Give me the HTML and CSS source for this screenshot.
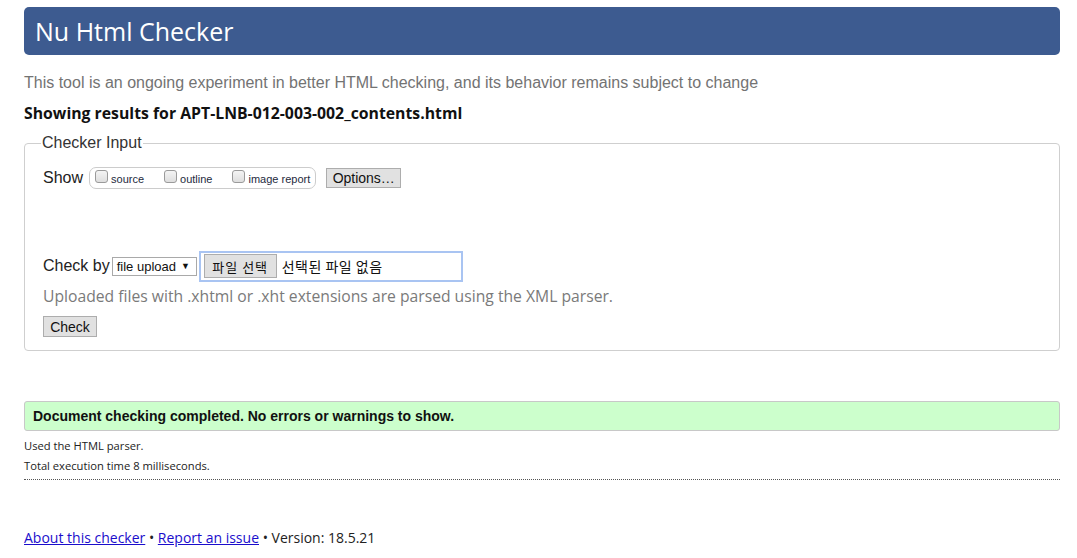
FILE: index.html
```html
<!DOCTYPE html>
<html lang="en">
<head>
<meta charset="utf-8">
<title>Nu Html Checker</title>
<link rel="stylesheet" href="styles.css">
</head>
<body>
<h1 class="banner">Nu Html Checker</h1>
<p class="intro">This tool is an ongoing experiment in better HTML checking, and its behavior remains subject to change</p>
<p class="showing">Showing results for APT-LNB-012-003-002_contents.html</p>
<fieldset class="input-box">
  <legend class="legend">Checker Input</legend>
  <div class="row show-row">
    <span class="row-label">Show</span>
    <span class="opts">
      <label class="opt"><span class="cb"></span><span class="opt-text">source</span></label>
      <label class="opt"><span class="cb"></span><span class="opt-text">outline</span></label>
      <label class="opt"><span class="cb"></span><span class="opt-text">image report</span></label>
    </span>
    <span class="btn btn-options">Options…</span>
  </div>
  <div class="row check-row">
    <span class="row-label">Check by</span>
    <span class="select">file upload <span class="arrow">▼</span></span>
    <span class="file">
      <span class="btn btn-file">파일 선택</span>
      <span class="file-text">선택된 파일 없음</span>
    </span>
  </div>
  <p class="note">Uploaded files with .xhtml or .xht extensions are parsed using the XML parser.</p>
  <span class="btn btn-check">Check</span>
</fieldset>
<div class="success">Document checking completed. No errors or warnings to show.</div>
<div class="meta-block">
  <p class="meta">Used the HTML parser.</p>
  <p class="meta">Total execution time 8 milliseconds.</p>
</div>
<hr class="sep">
<p class="footer"><a href="#">About this checker</a> • <a href="#">Report an issue</a> • Version: 18.5.21</p>
</body>
</html>
```
FILE: styles.css
```css
html, body { margin: 0; padding: 0; background: #fff; }
body {
  padding: 7px 17px 0 24px;
  font-family: "Liberation Sans", Arial, sans-serif;
  color: #222;
}
.banner {
  margin: 0;
  height: 48px;
  display: flex;
  align-items: center;
  padding: 0 11px;
  background: #3d5b90;
  color: #fff;
  border-radius: 5px;
  font-family: "Open Sans", "Noto Sans", sans-serif;
  font-weight: normal;
  font-size: 25px;
}
.intro {
  margin: 17px 0 0;
  height: 22px;
  line-height: 22px;
  font-size: 16px;
  color: #737373;
}
.showing {
  margin: 8px 0 0;
  height: 22px;
  line-height: 22px;
  font-family: "Open Sans", "Noto Sans", sans-serif;
  font-weight: bold;
  font-size: 15.8px;
  color: #111;
}
.input-box {
  margin: 9px 0 0;
  padding: 13px 18px 13px 18px;
  border: 1px solid #cfcfcf;
  border-radius: 4px;
  min-height: 0;
}
.legend {
  padding: 0 1px;
  margin-left: -2px;
  font-size: 16px;
  color: #333;
  line-height: 20px;
}
.row { display: flex; align-items: center; }
.row-label { font-size: 16px; color: #222; }
.show-row { height: 24px; }
.opts {
  display: flex;
  align-items: center;
  margin-left: 6px;
  height: 20px;
  padding: 0 5px 0 5px;
  border: 1px solid #cccccc;
  border-radius: 7px;
}
.opt { display: flex; align-items: center; }
.opt + .opt { margin-left: 20px; }
.cb {
  width: 11px; height: 11px;
  border: 1px solid #9a9a9a;
  border-radius: 3px;
  background: linear-gradient(#f4f4f4, #dedede);
  margin-right: 3px;
  margin-top: -3px;
}
.opt-text { font-size: 11px; color: #1e2a40; margin-top: 2px; }
.btn {
  display: inline-flex;
  align-items: center;
  justify-content: center;
  background: #e1e1e1;
  border: 1px solid #adadad;
  font-size: 14px;
  color: #111;
  box-sizing: border-box;
}
.btn-options { margin-left: 10px; width: 75px; height: 20px; }
.check-row { margin-top: 61px; height: 30px; }
.select {
  display: inline-flex;
  align-items: center;
  margin-left: 2px;
  height: 19px;
  width: 85px;
  box-sizing: border-box;
  padding-left: 4px;
  border: 1px solid #a9a9a9;
  font-size: 13px;
  color: #111;
}
.arrow { font-size: 9px; margin-left: 5px; }
.file {
  display: inline-flex;
  align-items: center;
  margin-left: 2px;
  width: 264px;
  height: 31px;
  box-sizing: border-box;
  border: 2px solid #a9c4f2;
  padding-left: 3px;
}
.btn-file { width: 73px; height: 24px; font-family: "Noto Sans CJK KR", sans-serif; font-size: 13px; letter-spacing: 1px; }
.file-text { margin-left: 5px; font-family: "Noto Sans CJK KR", sans-serif; font-size: 14px; letter-spacing: 0.5px; color: #111; }
.note {
  margin: 2px 0 0;
  height: 26px;
  line-height: 26px;
  font-family: "Open Sans", "Noto Sans", sans-serif;
  font-size: 15.7px;
  color: #7a7a7a;
}
.btn-check { margin-top: 7px; width: 54px; height: 21px; }
.success {
  margin-top: 50px;
  height: 30px;
  box-sizing: border-box;
  display: flex;
  align-items: center;
  padding-left: 8px;
  background: #ccffcc;
  border: 1px solid #c8c8c8;
  border-radius: 3px;
  font-weight: bold;
  font-size: 14px;
  color: #111;
}
.meta-block { padding-top: 5px; }
.meta {
  margin: 0;
  height: 20px;
  line-height: 20px;
  font-family: "Open Sans", "Noto Sans", sans-serif;
  font-size: 11.2px;
  color: #222;
}
.sep {
  margin: 3px 0 0;
  border: 0;
  border-top: 1px dotted #555;
  height: 0;
}
.footer {
  margin: 48px 0 0;
  font-family: "Open Sans", "Noto Sans", sans-serif;
  font-size: 14px;
  color: #222;
}
.footer a { color: #1a0dcc; }
```
